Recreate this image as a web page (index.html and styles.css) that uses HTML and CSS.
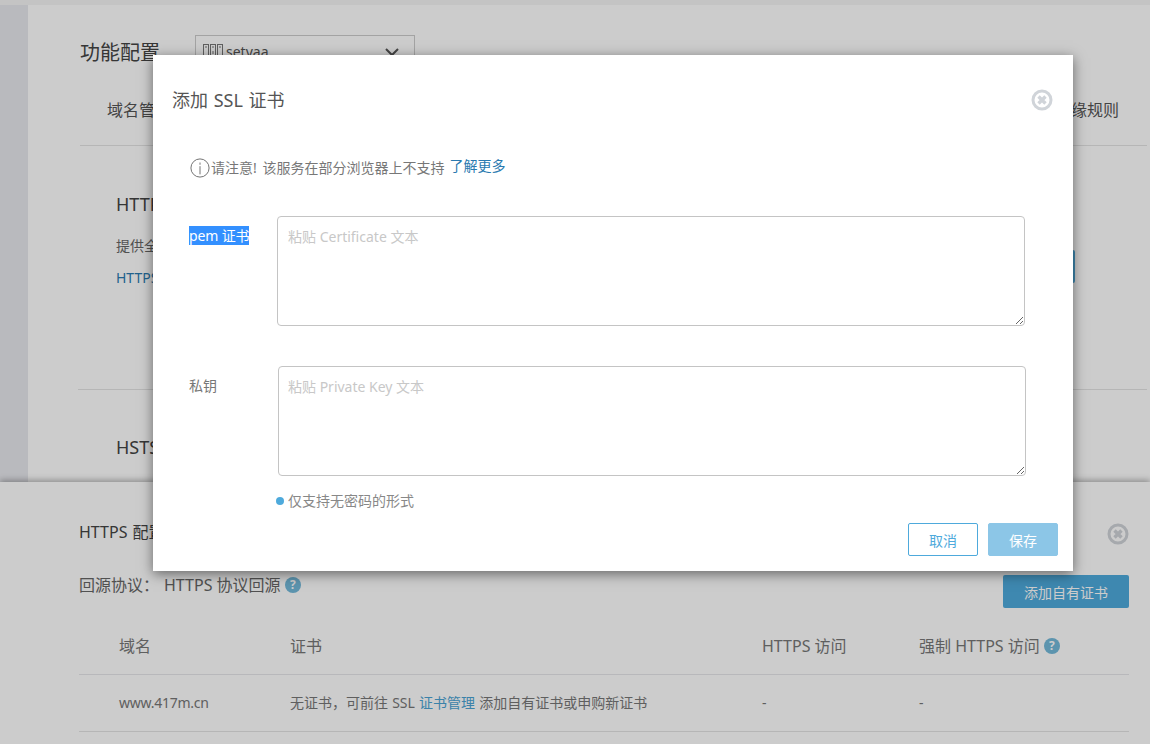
FILE: index.html
```html
<!DOCTYPE html>
<html lang="zh-CN">
<head>
<meta charset="utf-8">
<title>添加 SSL 证书</title>
<link rel="stylesheet" href="styles.css">
</head>
<body>
<div class="page">
  <div class="top-strip"></div>
  <div class="workspace">
    <aside class="rail"></aside>
    <main class="main">
      <div class="config-row">
        <h1 class="config-title">功能配置</h1>
        <div class="selector">
          <svg class="sel-icon" width="20" height="14" viewBox="0 0 20 14" fill="none" stroke="#777" stroke-width="1"><rect x=".5" y=".5" width="5" height="13"/><rect x="7.5" y=".5" width="5" height="13"/><rect x="14.5" y=".5" width="5" height="13"/><path d="M2 3h2M9 3h2M16 3h2M10 7v3"/></svg>
          <span class="sel-text">setyaa</span>
          <svg class="sel-caret" width="14" height="9" viewBox="0 0 14 9" fill="none" stroke="#555" stroke-width="2"><path d="M1 1l6 6 6-6"/></svg>
        </div>
      </div>
      <nav class="tabs"><span>域名管理</span><span>边缘规则</span></nav>
      <section class="feature feature-https">
        <h2 class="feature-title">HTTPS 配置</h2>
        <div class="feature-body">
          <div>
            <p class="feature-desc">提供全站</p>
            <a class="feature-link">HTTPS 配置说明</a>
          </div>
          <button class="feature-btn">配置</button>
        </div>
      </section>
      <section class="feature feature-hsts">
        <h2 class="feature-title">HSTS 配置</h2>
      </section>
    </main>
  </div>
  <section class="drawer">
    <div class="drawer-head">
      <h2 class="drawer-title">HTTPS 配置</h2>
      <svg class="close" width="22" height="22" viewBox="0 0 22 22"><circle cx="11" cy="11" r="9" fill="none" stroke="#d0d4d9" stroke-width="3"/><path d="M7.5 7.5l7 7M14.5 7.5l-7 7" stroke="#d0d4d9" stroke-width="3.4"/></svg>
    </div>
    <div class="origin-row">
      <div class="origin">回源协议：<span class="origin-val">HTTPS 协议回源</span>
        <span class="help">?</span>
      </div>
      <button class="add-btn">添加自有证书</button>
    </div>
    <div class="cert-table">
      <div class="cert-row cert-head">
        <div>域名</div><div>证书</div><div>HTTPS 访问</div><div>强制 HTTPS 访问 <span class="help">?</span></div>
      </div>
      <div class="cert-row cert-body">
        <div class="cert-domain">www.417m.cn</div>
        <div>无证书，可前往 SSL <a class="cert-link">证书管理</a> 添加自有证书或申购新证书</div>
        <div>-</div><div>-</div>
      </div>
    </div>
  </section>
  <div class="overlay"></div>
  <div class="modal">
    <header class="modal-head">
      <h2 class="modal-title">添加 SSL 证书</h2>
      <svg class="close" width="22" height="22" viewBox="0 0 22 22"><circle cx="11" cy="11" r="9" fill="none" stroke="#d0d4d9" stroke-width="3"/><path d="M7.5 7.5l7 7M14.5 7.5l-7 7" stroke="#d0d4d9" stroke-width="3.4"/></svg>
    </header>
    <div class="notice">
      <svg class="notice-icon" width="20" height="20" viewBox="0 0 22 22" fill="none" stroke="#666"><circle cx="11" cy="11" r="10"/><path d="M11 9v9M11 5v2.4"/></svg>
      <span class="notice-text">请注意! 该服务在部分浏览器上不支持</span>
      <a class="notice-link">了解更多</a>
    </div>
    <div class="field field-cert">
      <label class="field-label"><span class="selected">pem 证书</span></label>
      <textarea class="field-input" placeholder="粘贴 Certificate 文本"></textarea>
    </div>
    <div class="field field-key">
      <label class="field-label">私钥</label>
      <textarea class="field-input" placeholder="粘贴 Private Key 文本"></textarea>
    </div>
    <p class="hint"><span class="dot"></span>仅支持无密码的形式</p>
    <footer class="modal-foot">
      <button class="btn btn-ghost">取消</button>
      <button class="btn btn-save">保存</button>
    </footer>
  </div>
</div>
</body>
</html>
```
FILE: styles.css
```css
* { box-sizing: border-box; }
html, body { margin: 0; height: 100%; overflow: hidden; }
body { font-family: "Noto Sans", "Noto Sans CJK SC", sans-serif; color: #444; background: #fff; }
h1, h2, p { margin: 0; font-weight: 400; }
button { font-family: inherit; }

.page { position: relative; width: 1150px; height: 744px; display: flex; flex-direction: column; overflow: hidden; }
.top-strip { height: 5px; background: #f6f6f6; flex: none; }
.workspace { flex: 1; display: flex; min-height: 0; overflow: hidden; }
.rail { width: 28px; background: #e8e9ee; flex: none; }
.main { flex: 1; padding: 30px 3px 0 52px; background: #fff; min-width: 0; }

.config-row { display: flex; align-items: flex-start; height: 56px; }
.config-title { font-size: 20px; line-height: 28px; color: #444; width: 115px; margin-top: 4px; }
.selector { width: 220px; height: 40px; border: 1px solid #ccc; display: flex; align-items: flex-start; padding: 8px 0 0 7px; font-size: 14px; color: #555; }
.sel-text { margin-left: 3px; line-height: 15px; }
.sel-caret { margin: 4px 15px 0 auto; }

.tabs { display: flex; justify-content: space-between; padding: 9px 28px 0 27px; height: 55px; border-bottom: 1px solid #e4e4e4; font-size: 16px; line-height: 20px; color: #555; }

.feature { padding: 46px 0 0 36px; }
.feature-https { height: 244px; border-bottom: 1px solid #e4e4e4; margin-left: -2px; padding-left: 38px; }
.feature-hsts { padding-top: 45px; }
.feature-title { font-size: 18px; line-height: 24px; color: #444; }
.feature-body { display: flex; justify-content: space-between; align-items: flex-start; padding-right: 72px; margin-top: 20px; }
.feature-desc { font-size: 14px; line-height: 20px; color: #666; }
.feature-link { display: block; margin-top: 12px; font-size: 14px; line-height: 20px; color: #2a7ab0; }
.feature-btn { width: 100px; height: 33px; margin-top: 14px; background: #4eaadc; border: 0; border-radius: 2px; color: #fff; }

.drawer { flex: none; height: 262px; padding: 36px 21px 0 79px; background: #fff; box-shadow: 0 -2px 6px rgba(0,0,0,.3); position: relative; }
.drawer-head { display: flex; justify-content: space-between; align-items: center; height: 28px; margin-top: 2px; }
.drawer-title { font-size: 16px; line-height: 24px; color: #444; margin-top: -4px; word-spacing: 1px; }
.origin-row { display: flex; justify-content: space-between; align-items: flex-start; margin-top: 24px; height: 51px; }
.origin { font-size: 16px; line-height: 24px; color: #666; padding-top: 1px; }
.origin-val { margin-left: 5px; }
.help { display: inline-flex; width: 16px; height: 16px; border-radius: 50%; background: #73b9da; color: #fff; font-size: 12px; font-weight: 700; line-height: 16px; align-items: center; justify-content: center; vertical-align: 2px; }
.add-btn { width: 126px; height: 33px; margin-top: 3px; background: #4eaadc; border: 0; border-radius: 2px; color: #fff; font-size: 14px; }

.cert-row { display: grid; grid-template-columns: 171px 472px 157px 1fr; padding-left: 40px; border-bottom: 1px solid #e6e6ea; align-items: center; color: #777; }
.cert-head { height: 52px; font-size: 16px; padding-bottom: 8px; }
.cert-body { height: 57px; font-size: 14px; padding-bottom: 2px; border-bottom-color: #e4e4e4; word-spacing: .5px; }
.cert-domain { letter-spacing: -.25px; }
.cert-link { color: #4aa3d4; }

.overlay { position: absolute; inset: 0; background: rgba(0,0,0,.2); }

.modal { position: absolute; left: 153px; top: 55px; width: 920px; height: 516px; background: #fff; box-shadow: 0 3px 12px rgba(0,0,0,.5); padding: 0 15px 0 19px; }
.modal-head { display: flex; justify-content: space-between; align-items: center; height: 90px; padding: 0 5px 0 0; }
.modal-title { font-size: 18px; line-height: 26px; color: #555; word-spacing: 1px; }
.notice { display: flex; align-items: center; margin: 11px 0 0 18px; height: 22px; font-size: 14px; color: #777; }
.notice-icon { margin: 2px 1px 0 0; }
.notice-text { word-spacing: 2px; }
.notice-link { margin: -5px 0 0 5px; color: #2a7ab0; }
.field { display: flex; align-items: flex-start; margin-left: 17px; }
.field-label { flex: none; font-size: 14px; line-height: 17px; color: #777; padding-top: 11px; }
.field-cert { margin-top: 38px; }
.field-cert .field-label { width: 88px; }
.field-key { margin-top: 40px; }
.field-key .field-label { width: 89px; }
.selected { background: #3390ff; color: #fff; letter-spacing: -.15px; }
.field-input { width: 748px; height: 110px; border: 1px solid #c4c4c4; border-radius: 4px; padding: 10px; font: 14px/20px "Noto Sans", "Noto Sans CJK SC", sans-serif; color: #555; outline: 0; display: block; }
.field-input::placeholder { color: #c8c8c8; }
.field-key .field-input { padding-left: 9px; }
.hint { display: flex; align-items: center; margin: 14px 0 0 104px; height: 20px; font-size: 14px; color: #888; }
.dot { width: 8px; height: 8px; border-radius: 50%; background: #4eaadc; margin: 1px 4px 0 0; }
.modal-foot { display: flex; justify-content: flex-end; gap: 10px; margin-top: 13px; }
.btn { width: 70px; height: 33px; border-radius: 2px; font-size: 14px; padding: 0; }
.btn-ghost { background: #fff; border: 1px solid #4eaadc; color: #4eaadc; }
.btn-save { background: #8cc6e7; border: 1px solid #8cc6e7; color: #fff; }
```
